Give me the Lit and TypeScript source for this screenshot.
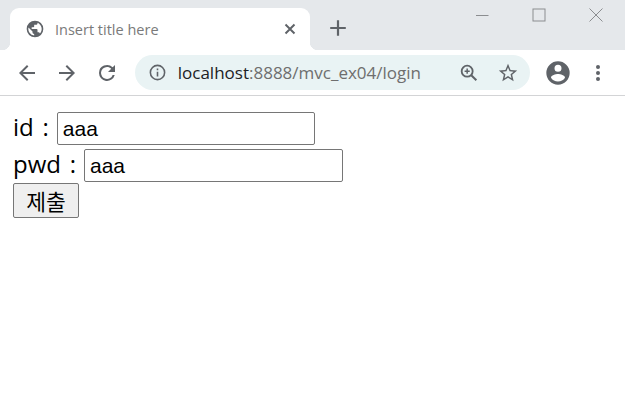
import { LitElement, html, css, svg } from "lit";
import { customElement } from "lit/decorators.js";

const ico = (size: number, body: unknown, vb = "0 0 24 24") =>
  html`<svg width=${size} height=${size} viewBox=${vb} fill="currentColor">${body}</svg>`;

@customElement("app-root")
export class AppRoot extends LitElement {
  static styles = css`
    :host { display: block; width: 625px; height: 416px; background: #fff; overflow: hidden; font-family: "Open Sans", "Noto Sans CJK KR", sans-serif; color: #000; }
    .strip { height: 50px; background: #e5e8eb; display: flex; align-items: flex-end; position: relative; box-sizing: border-box; padding-left: 10px; }
    .tab { width: 300px; height: 42px; background: #fff; border-radius: 9px 9px 0 0; display: flex; align-items: center; box-sizing: border-box; padding: 0 11px 0 15px; position: relative; color: #5f6368; }
    .tab::before, .tab::after { content: ""; position: absolute; bottom: 0; width: 8px; height: 8px; }
    .tab::before { left: -8px; background: radial-gradient(circle at 0 0, #e5e8eb 8px, #fff 8.5px); }
    .tab::after { right: -8px; background: radial-gradient(circle at 100% 0, #e5e8eb 8px, #fff 8.5px); }
    .title { flex: 1; margin-left: 10px; font-size: 14.5px; font-family: "Open Sans", sans-serif; color: #7a7a7a; }
    .close { display: flex; color: #5f6368; }
    .plus { display: flex; margin: 0 0 11px 17px; color: #5f6368; }
    .win { position: absolute; top: 7px; right: 1px; display: flex; color: #8b8d90; }
    .win span { display: flex; width: 57px; justify-content: center; }
    .bar { height: 46px; border-bottom: 1px solid #d3d4d6; box-sizing: border-box; display: flex; align-items: center; padding: 0 15px 0 15px; color: #5f6368; }
    .nav { display: flex; width: 40px; }
    .nav.avatar { width: auto; }
    .omni { width: 396px; height: 35px; border-radius: 18px; background: #e9f3f4; display: flex; align-items: center; box-sizing: border-box; padding: 0 11px 0 13px; margin-right: 14px; }
    .url { flex: 1; margin-left: 11px; font-size: 17px; font-family: "Open Sans", sans-serif; color: #6e6e6e; white-space: nowrap; }
    .url b { font-weight: 400; color: #202124; }
    .omni .r { display: flex; margin-left: 17px; }
    .more { display: flex; margin-left: 14px; }
    main { padding: 14px 13px 0; font-size: 24px; }
    .row { display: flex; align-items: center; height: 37px; white-space: pre; }
    .row label { margin-right: 8px; padding-bottom: 4px; line-height: 30px; word-spacing: 2.5px; }
    input { box-sizing: border-box; height: 33px; border: 1px solid #767676; border-radius: 2px; padding: 1px 5px; font: 21px "Liberation Sans", sans-serif; color: #000; background: #fff; margin: 0; outline: none; }
    .i1 { width: 258px; }
    .i2 { width: 259px; }
    button { display: block; box-sizing: border-box; width: 66px; height: 35px; margin: -1px 0 0; padding: 0; border: 1px solid #767676; border-radius: 2px; background: #efefef; font: 21.5px "Noto Sans CJK KR", sans-serif; color: #000; }
  `;

  render() {
    return html`
      <div class="strip">
        <div class="tab">
          ${ico(20, svg`<path d="M12 2a10 10 0 1 0 0 20 10 10 0 0 0 0-20zm-1 17.9A8 8 0 0 1 4.2 10.2L9 15v1c0 1.1.9 2 2 2v1.9zm6.9-2.5c-.3-.8-1-1.4-1.9-1.4h-1v-3c0-.6-.4-1-1-1H8v-2h2c.6 0 1-.4 1-1V7h2c1.1 0 2-.9 2-2v-.4a8 8 0 0 1 2.9 12.8z"/>`)}
          <span class="title">Insert title here</span>
          <span class="close">${ico(18, svg`<path d="M6 6l12 12M18 6L6 18" stroke="currentColor" stroke-width="2.6" fill="none"/>`)}</span>
        </div>
        <span class="plus">${ico(22, svg`<path d="M12 3.5v17M3.5 12h17" stroke="currentColor" stroke-width="2.4" fill="none"/>`)}</span>
        <div class="win">
          <span>${ico(16, svg`<path d="M2 8.5h12.5" stroke="currentColor" stroke-width="1" fill="none"/>`, "0 0 16 16")}</span>
          <span>${ico(16, svg`<rect x="2" y="2" width="12" height="12" stroke="currentColor" stroke-width="1" fill="none"/>`, "0 0 16 16")}</span>
          <span>${ico(16, svg`<path d="M1.5 1.5l13 13M14.5 1.5l-13 13" stroke="currentColor" stroke-width="1" fill="none"/>`, "0 0 16 16")}</span>
        </div>
      </div>
      <div class="bar">
        <span class="nav">${ico(24, svg`<path d="M20 11H7.8l5.6-5.6L12 4l-8 8 8 8 1.4-1.4L7.8 13H20z"/>`)}</span>
        <span class="nav">${ico(24, svg`<path d="M4 11h12.2l-5.6-5.6L12 4l8 8-8 8-1.4-1.4 5.6-5.6H4z"/>`)}</span>
        <span class="nav">${ico(24, svg`<path d="M17.65 6.35A8 8 0 0 0 4 12a8 8 0 0 0 15.73 2h-2.08A6 6 0 1 1 12 6c1.66 0 3.14.69 4.22 1.78L13 11h7V4z"/>`)}</span>
        <div class="omni">
          ${ico(19, svg`<path d="M11 7h2v2h-2zm0 4h2v6h-2zm1-9a10 10 0 1 0 0 20 10 10 0 0 0 0-20zm0 18a8 8 0 1 1 0-16 8 8 0 0 1 0 16z"/>`)}
          <span class="url"><b>localhost</b>:8888/mvc_ex04/login</span>
          <span class="r">${ico(22, svg`<circle cx="10" cy="10" r="6" fill="none" stroke="currentColor" stroke-width="2"/><path d="M14.5 14.5l5.5 5.5" stroke="currentColor" stroke-width="2.2" fill="none"/><path d="M10 7.2v5.6M7.2 10h5.6" stroke="currentColor" stroke-width="1.6" fill="none"/>`)}</span>
          <span class="r">${ico(22, svg`<path d="M22 9.24l-7.19-.62L12 2 9.19 8.63 2 9.24l5.46 4.73L5.82 21 12 17.27 18.18 21l-1.63-7.03L22 9.24zM12 15.4l-3.76 2.27 1-4.28-3.32-2.88 4.38-.38L12 6.1l1.71 4.04 4.38.38-3.32 2.88 1 4.28L12 15.4z"/>`)}</span>
        </div>
        <span class="nav avatar">${ico(28, svg`<path d="M12 2a10 10 0 1 0 0 20 10 10 0 0 0 0-20zm0 3a3 3 0 1 1 0 6 3 3 0 0 1 0-6zm0 14.2a7.2 7.2 0 0 1-6-3.22c.03-1.99 4-3.08 6-3.08s5.97 1.09 6 3.08a7.2 7.2 0 0 1-6 3.22z"/>`)}</span>
        <span class="more">${ico(24, svg`<circle cx="12" cy="6" r="2"/><circle cx="12" cy="12" r="2"/><circle cx="12" cy="18" r="2"/>`)}</span>
      </div>
      <main>
        <div class="row"><label>id :</label><input class="i1" value="aaa" /></div>
        <div class="row"><label>pwd :</label><input class="i2" value="aaa" /></div>
        <button>제출</button>
      </main>
    `;
  }
}
